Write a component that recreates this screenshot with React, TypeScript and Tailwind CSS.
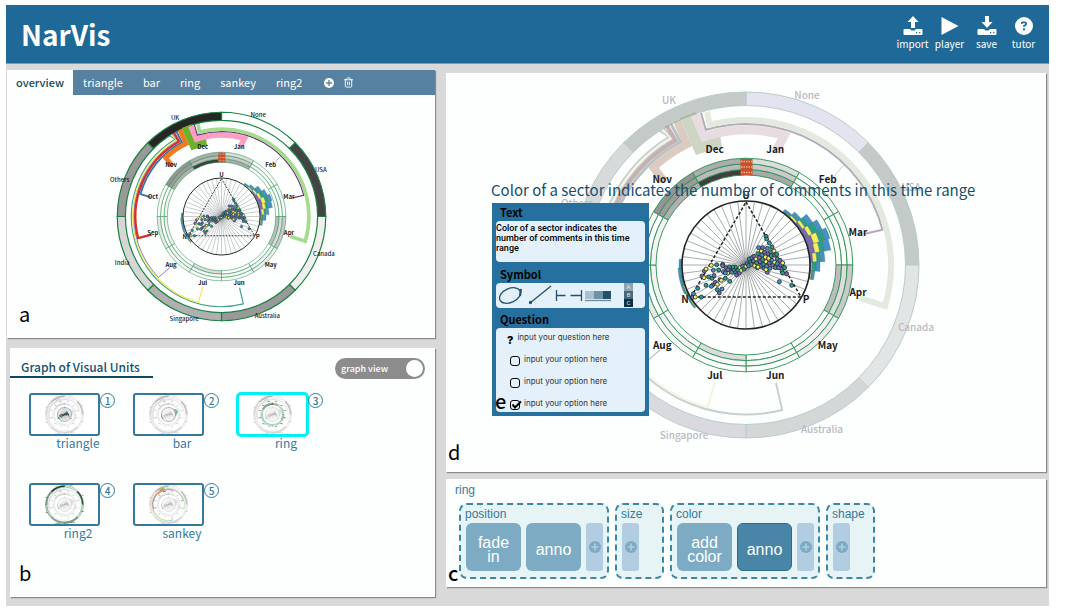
import { FaCircleQuestion } from "react-icons/fa6";
import { LuTrash2 } from "react-icons/lu";

type Layer = "outer" | "flow" | "ring" | "bars" | "triangle";

const point = (r: number, deg: number) => {
  const t = (deg * Math.PI) / 180;
  return `${(r * Math.sin(t)).toFixed(2)},${(-r * Math.cos(t)).toFixed(2)}`;
};

const sector = (r0: number, r1: number, a0: number, a1: number) =>
  `M${point(r0, a0)}L${point(r1, a0)}A${r1},${r1} 0 0 1 ${point(r1, a1)}L${point(r0, a1)}A${r0},${r0} 0 0 0 ${point(r0, a0)}Z`;

/* A ribbon that leaves the country ring, runs along a circle and ends at a month. */
const ribbon = (start: string, r: number, a0: number, a1: number, end: string) =>
  `M${start}L${point(r, a0)}A${r},${r} 0 0 ${a1 > a0 ? 1 : 0} ${point(r, a1)}L${end}`;

const countries = [
  { name: "None", fill: "#fdfffe", soft: "#e3e4ef", x: 61, y: -170 },
  { name: "USA", fill: "#444444", soft: "#c3cac8", x: 165, y: -78 },
  { name: "Canada", fill: "#efefef", soft: "#e2e5e6", x: 170, y: 62 },
  { name: "Australia", fill: "#999999", soft: "#d3d7d7", x: 76, y: 164 },
  { name: "Singapore", fill: "#b0b0b0", soft: "#dad9e0", x: -62, y: 170 },
  { name: "India", fill: "#d6d6d6", soft: "#dfe3e3", x: -165, y: 77 },
  { name: "Others", fill: "#999999", soft: "#d6dadb", x: -169, y: -62 },
  { name: "UK", fill: "#262626", soft: "#c3cac8", x: -77, y: -165 },
];

const months = ["Jan", "Feb", "Mar", "Apr", "May", "Jun", "Jul", "Aug", "Sep", "Oct", "Nov", "Dec"];

/* Comment counts per month as greys, from the inner track to the outer one. */
const tracks = [
  ["#a9a9a9", "#cbcbcb", "#dcdcdc"],
  ["#fdfffe", "#f8f8f8", "#fdfffe"],
  ["#fdfffe", "#fdfffe", "#f8f8f8"],
  ["#bdbdbd", "#dedede", "#cacaca"],
  ["#fdfffe", "#f3f3f3", "#ededed"],
  ["#fdfffe", "#f8f8f8", "#fdfffe"],
  ["#dcdcdc", "#f8f8f8", "#fdfffe"],
  ["#fdfffe", "#f3f3f3", "#f8f8f8"],
  ["#f3f3f3", "#fdfffe", "#e8e8e8"],
  ["#f3f3f3", "#fdfffe", "#f8f8f8"],
  ["#b0b0b0", "#9b9b9b", "#949494"],
  ["#3f3f3f", "#bababa", "#adadad"],
];

const hue = { p: "#7c68b0", y: "#f7ee58", g: "#2f9d86", b: "#4592c4" };

const stacks = [
  { from: 35, ends: [64, 65, 66, 68] },
  { from: 42.5, ends: [65, 67, 69, 72] },
  { from: 50, ends: [67, 70, 74, 79] },
  { from: 57.5, ends: [69, 73, 79, 84] },
  { from: 65, ends: [71, 77, 83, 88] },
  { from: 72.5, ends: [70, 75, 80, 86] },
  { from: 80, ends: [67, 71, 75, 79] },
  { from: 87.5, ends: [65, 66, 70, 74] },
  { from: 95, ends: [65, 66, 67, 69] },
  { from: 230, ends: [65, 66, 67, 67] },
  { from: 237.5, ends: [65, 65, 66, 67] },
  { from: 245, ends: [65, 66, 67, 68] },
  { from: 252.5, ends: [65, 65, 66, 68] },
  { from: 260, ends: [64, 65, 66, 68] },
  { from: 267.5, ends: [64, 64, 65, 67] },
];

const dots: [number, number][] = [
  [-160, 97], [-152, 96], [-158, 86], [-145, 70], [-134, 96], [-120, 61], [-132, 33], [-125, 18], [-120, 12],
  [-104, 1], [-98, 16], [-88, -1], [-82, 15], [-70, -2], [-68, 20], [-60, 8], [-55, 24], [-47, 10], [-42, 22],
  [-112, 36], [-102, 40], [-100, 60], [-104, 64], [-92, 52], [-86, 58], [-78, 44], [-74, 46], [-62, 40], [-49, 49],
  [-86, 74], [-72, 72], [-80, 84], [-70, 2], [-96, 32], [-126, 38], [-36, 14], [-30, 22], [-32, 6], [-24, 16],
  [-28, 30], [-20, 24], [-18, 8], [-14, 16], [-10, 4], [-6, 12], [-40, 6], [-50, 6], [-62, 24], [-54, 14],
  [0, 4], [4, -4], [8, 2], [12, -10], [10, -18], [16, -2], [18, -22], [22, -12], [26, 2], [24, -26], [30, -18],
  [32, -6], [34, 8], [36, -34], [38, -52], [40, -22], [42, -10], [44, 4], [46, -42], [48, -30], [50, -16],
  [52, -2], [54, 10], [50, -52], [56, -38], [58, -24], [60, -10], [62, 4], [60, -86], [62, -78], [70, -66],
  [64, -50], [66, -34], [68, -20], [70, -6], [72, 10], [78, -54], [74, -40], [76, -28], [78, -14], [80, 0],
  [84, -42], [86, -30], [86, -8], [88, 8], [92, -32], [94, -18], [94, -4], [98, 8], [102, -14], [104, 0],
  [110, -6], [112, 6], [116, 8], [108, 18], [110, 24], [122, 26], [64, 22], [60, 14], [36, 6], [100, 50], [137, 61],
];

const dotHues = [hue.p, hue.b, hue.g, hue.y, hue.g, hue.b, hue.p, hue.g, hue.y, hue.p, hue.g];

function RadialChart({
  view,
  focus,
  base = 1,
  weight = 1,
  soft = false,
  className,
}: {
  view: string;
  focus: Layer[];
  base?: number;
  weight?: number;
  soft?: boolean;
  className: string;
}) {
  const on = (layer: Layer) => base === 1 || focus.includes(layer);
  const look = (layer: Layer) => ({ opacity: on(layer) ? 1 : base, className: on(layer) ? "" : "grayscale" });
  return (
    <svg viewBox={view} className={className} fontFamily='"Noto Sans CJK SC", sans-serif' fontSize="10" textAnchor="middle">
      <g {...look("outer")}>
        {countries.map((c, i) => (
          <path
            key={c.name}
            d={sector(159.5, 173, i * 45, i * 45 + 45)}
            fill={soft ? c.soft : c.fill}
            stroke={soft ? "#b9cdc7" : "#1c8042"}
            strokeWidth={(soft ? 1 : 2) * weight}
          />
        ))}
        {countries.map((c) => (
          <text key={c.name} x={c.x} y={c.y + 4} fill={soft ? "#b9b9c4" : "#1b1b1b"} fontWeight="500">
            {c.name}
          </text>
        ))}
      </g>

      <g
        opacity={soft ? 0.42 : on("flow") ? 1 : base}
        fill="none"
        className={soft ? "saturate-[0.3]" : on("flow") ? "" : "grayscale"}
      >
        <path d={ribbon("-86,-134", 149.5, -31, -194, "30,118")} stroke="#45a394" strokeWidth={2 * weight} />
        <path d={ribbon("-84,-136", 147.5, -30.5, -165, "-31,116")} stroke="#f3ec5a" strokeWidth={2 * weight} />
        <path d={ribbon("-82,-137", 145.5, -30, -134, "-86,85")} stroke="#8272b4" strokeWidth="1.5" />
        <path d={ribbon("-79,-139", 143, -29.5, -104.5, "-116,30")} stroke="#d62f2d" strokeWidth={3 + weight} />
        <path d={ribbon("-75,-141", 139.5, -28, -74.5, "-118,-32")} stroke="#3673ad" strokeWidth="3" />
        <path d={ribbon("-69,-144", 134.5, -26, -43.5, "-82,-84")} stroke="#f47a20" strokeWidth="8" />
        <path d="M-66,-147L-50,-110L-24,-118L-26,-131L-42,-127L-50,-153Z" fill="#6db12c" />
        <path d={ribbon("-51,-150", 135, -18, 16.5, "31,-116")} stroke="#fb9fc4" strokeWidth="9" />
        <path d={ribbon("-45,-152", 141, -16.5, 75.5, "118,-31")} stroke="#6c2f7c" strokeWidth={2 * weight} />
        <path d={ribbon("-39,-153", 145, -14.5, 106.5, "114,33")} stroke="#a5db8c" strokeWidth="6" />
        <path d="M98,-100L84,-84" stroke="#a27bb0" strokeWidth="1" />
      </g>

      <g {...look("ring")}>
        {tracks.map((t, m) =>
          t.map((fill, k) => (
            <path
              key={`${m}-${k}`}
              d={sector(90 + k * 5.6, 95.6 + k * 5.6, m * 30, m * 30 + 30)}
              fill={fill}
              stroke="#2a9150"
              strokeWidth={0.9 * weight}
            />
          )),
        )}
        <rect x="-5.5" y="-106" width="12" height="16" fill="#c8502a" />
        <path d="M-5,-103.500H6M-5,-98H6M-5,-92.500H6" stroke="#eab39a" strokeWidth="1.5" strokeDasharray="1.500 1" />
        <g fill="#1b1b1b" fontWeight="700">
          {months.map((m, i) => {
            const [x, y] = point(117, 15 + i * 30).split(",").map(Number);
            return (
              <text key={m} x={x - 1} y={y + 1}>
                {m}
              </text>
            );
          })}
        </g>
      </g>

      <g {...look("bars")}>
        {stacks.map((s) =>
          [hue.p, hue.y, hue.g, hue.b].map((fill, k) => (
            <path
              key={`${s.from}-${fill}`}
              d={sector(k ? s.ends[k - 1] : 64, s.ends[k], s.from, s.from + 7.5)}
              fill={fill}
              stroke="#2c5f68"
              strokeWidth="0.3"
            />
          )),
        )}
      </g>

      <circle
        r="64"
        fill="#fdfffe"
        stroke="#222"
        strokeWidth={1.6 * weight}
        strokeOpacity={on("bars") || on("triangle") ? 1 : base}
      />
      <g {...look("triangle")}>
        {Array.from({ length: 48 }, (_, i) => (
          <path key={i} d={`M0,0L${point(63.5, i * 7.5)}`} stroke="#55555c" strokeWidth={0.5 * weight} />
        ))}
        <path d="M0,-63L55,32H-55Z" fill="none" stroke="#222" strokeWidth="1.5" strokeDasharray="3 2" />
        {dots.map(([x, y], i) => (
          <circle
            key={i}
            cx={x / 3}
            cy={y / 3}
            r="2"
            fill={dotHues[(i * 7 + (i % 3)) % dotHues.length]}
            stroke="#1d2733"
            strokeWidth={0.8 * weight}
          />
        ))}
        <g fill="#1b1b1b" fontWeight="700">
          <text x="0" y="-66">U</text>
          <text x="-61" y="38">N</text>
          <text x="60" y="38">P</text>
        </g>
      </g>
    </svg>
  );
}

const Plus = ({ className, sign }: { className: string; sign: string }) => (
  <svg viewBox="0 0 12 12" className={className}>
    <circle cx="6" cy="6" r="6" fill="currentColor" />
    <path d="M6 2.500v7M2.500 6h7" stroke={sign} strokeWidth="1.6" />
  </svg>
);

const Tray = ({ up = false }: { up?: boolean }) => (
  <svg viewBox="0 0 20 20" className="h-5 w-5" fill="currentColor">
    {up ? <path d="M10 0l5.500 6h-3.500v6H8V6H4.500z" /> : <path d="M8 0h4v6h3.500L10 12 4.500 6H8z" />}
    <path
      fillRule="evenodd"
      d="M1.500 13h5.500l1.500 1.500h3L13 13h5.500a1 1 0 0 1 1 1v4a1 1 0 0 1-1 1h-17a1 1 0 0 1-1-1v-4a1 1 0 0 1 1-1zM13 16v1.300h1.300V16zM16 16v1.300h1.300V16z"
    />
  </svg>
);

const actions = [
  { name: "import", icon: <Tray up /> },
  {
    name: "player",
    icon: (
      <svg viewBox="0 0 20 20" className="h-5 w-5" fill="currentColor">
        <path d="M1.500 1l17 9-17 9z" />
      </svg>
    ),
  },
  { name: "save", icon: <Tray /> },
  { name: "tutor", icon: <FaCircleQuestion className="h-5 w-[18px]" /> },
];

const units: { name: string; focus: Layer[]; selected?: boolean }[] = [
  { name: "triangle", focus: ["triangle"] },
  { name: "bar", focus: ["bars"] },
  { name: "ring", focus: ["ring"], selected: true },
  { name: "ring2", focus: ["outer"] },
  { name: "sankey", focus: ["flow"] },
];

const groups = [
  { name: "position", steps: ["fade in", "anno"], active: -1 },
  { name: "size", steps: [], active: -1 },
  { name: "color", steps: ["add color", "anno"], active: 1 },
  { name: "shape", steps: [], active: -1 },
];

const panel = "relative bg-[#fdfffe] shadow-[1px_1px_1px_0px_#8a8a8a]";
const marker = "absolute text-[20px] leading-6 text-black";

function Heading({ children }: { children: string }) {
  return <h3 className="pl-1 text-[11px] leading-[18px] font-bold text-black">{children}</h3>;
}

function Editor() {
  return (
    <form className="absolute top-[130px] left-[46px] flex w-[157px] flex-col bg-[#25709f] px-1 pb-1">
      <Heading>Text</Heading>
      <textarea
        aria-label="Text"
        defaultValue="Color of a sector indicates the number of comments in this time range"
        className="h-[41px] resize-none overflow-hidden rounded bg-[#eef7ff]/95 py-[2px] font-['Roboto',sans-serif] text-[9px] leading-[10px] font-medium text-black"
      />
      <div className="pt-[3px]">
        <Heading>Symbol</Heading>
      </div>
      <div className="flex h-[25px] items-center rounded bg-[#eef7ff]/95">
        <svg viewBox="0 0 149 25" className="h-[25px] w-full" fill="none" stroke="#24506a" strokeWidth="1.3">
          <ellipse cx="14" cy="12.5" rx="11" ry="7" transform="rotate(-24 14 12.5)" />
          <path d="M25 6l-1 7" strokeWidth="2" />
          <path d="M34 20L55 3" />
          <circle cx="34.5" cy="19.5" r="1" fill="#24506a" />
          <path d="M60.500 7v11M60.500 12.500h9M85.500 7v11M85.500 12.500h-11" />
          <g stroke="none">
            <path d="M89 8h9v8h-9z" fill="#a9c1cf" />
            <path d="M98 8h9v8h-9z" fill="#6e93a9" />
            <path d="M107 8h8v8h-8z" fill="#24506a" />
            <path d="M128 0h9v8h-9z" fill="#8fa3b0" />
            <path d="M128 8h9v8h-9z" fill="#48687c" />
            <path d="M128 16h9v8h-9z" fill="#0f2f42" />
          </g>
          <path d="M89 17.500h26" stroke="#6e8a9a" />
          <g stroke="none" fill="#dfe9ef" fontSize="6" fontFamily="Roboto, sans-serif" textAnchor="middle">
            <text x="132.5" y="6">A</text>
            <text x="132.5" y="14">B</text>
            <text x="132.5" y="22">C</text>
          </g>
        </svg>
      </div>
      <div className="pt-[2px]">
        <Heading>Question</Heading>
      </div>
      <div className="flex flex-col gap-[10px] rounded bg-[#eef7ff]/95 pt-[3px] pb-[3px] font-['Inter',sans-serif] text-[8px] leading-3 text-[#333]">
        <div className="flex h-3 items-center gap-1 pl-[11px]">
          <span className="pt-[6px] text-[11px] font-extrabold text-black">?</span>
          <input aria-label="Question" defaultValue="input your question here" className="h-3 w-[120px] bg-transparent" />
        </div>
        {[false, false, true].map((on, i) => (
          <div key={i} className="flex h-3 items-center gap-1 pl-[14px]">
            <span className="relative mt-1 size-[10px]">
              <input
                type="checkbox"
                aria-label={`Option ${i + 1} is correct`}
                defaultChecked={on}
                className="peer block size-[10px] appearance-none rounded-[3px] border border-black"
              />
              <svg
                viewBox="0 0 12 10"
                className="pointer-events-none absolute top-0 left-0 hidden h-[10px] w-3 peer-checked:block"
                fill="none"
                stroke="#000"
                strokeWidth="2"
              >
                <path d="M2.500 4.500L5 7.500 11 1.500" />
              </svg>
            </span>
            <input aria-label={`Option ${i + 1}`} defaultValue="input your option here" className="h-3 w-[110px] bg-transparent" />
          </div>
        ))}
      </div>
      <span className="absolute bottom-[3px] left-[3px] text-[20px] leading-6 font-medium text-black">e</span>
    </form>
  );
}

export default function App() {
  return (
    <div className="min-h-screen bg-white pt-[5px] pr-[23px] pb-[3px] pl-[6px] font-['Noto_Sans_CJK_SC',sans-serif]">
      <div className="flex min-h-[601px] flex-col bg-[#d9d9d9]">
        <header className="flex h-[59px] items-center justify-between border-b border-[#8e9aa3] bg-[#1f6998] pr-[7px] pl-[15px] text-white">
          <h1 className="text-[28px] leading-8 font-bold">NarVis</h1>
          <nav className="flex">
            {actions.map((a) => (
              <button key={a.name} type="button" className="flex w-[37px] flex-col items-center text-[10px] leading-4">
                {a.icon}
                {a.name}
              </button>
            ))}
          </nav>
        </header>

        <main className="grid grid-cols-[428fr_600fr] gap-[11px] pr-[3px] pl-px">
          <div className="flex min-w-0 flex-col gap-[10px] pt-[6px]">
            <section className={panel}>
              <div className="flex h-[25px] items-center bg-[#5781a0] text-[11px] leading-[25px] text-white">
                <button type="button" className="bg-[#fdfffe] px-[9px] font-medium text-[#174a56]">
                  overview
                </button>
                {["triangle", "bar", "ring", "sankey", "ring2"].map((t) => (
                  <button key={t} type="button" className="px-[10px]">
                    {t}
                  </button>
                ))}
                <button type="button" aria-label="Add tab" className="pl-3">
                  <Plus className="size-[10px]" sign="#5781a0" />
                </button>
                <button type="button" aria-label="Delete tab" className="pl-[9px]">
                  <LuTrash2 className="size-[11px]" />
                </button>
              </div>
              <RadialChart view="-200 -201 400 402" focus={[]} className="mx-auto h-[243px] w-[241px]" />
              <span className={`${marker} bottom-3 left-3`}>a</span>
            </section>

            <section className={`${panel} ml-[3px] h-[249px]`}>
              <div className="flex items-start justify-between pt-[10px] pr-[10px]">
                <h2 className="border-b-2 border-[#0f4866] pr-[13px] pl-[11px] text-[12px] leading-[18px] font-medium text-[#164e6c]">
                  Graph of Visual Units
                </h2>
                <label className="flex h-[21px] w-[90px] cursor-pointer items-center justify-between rounded-full bg-[#8c8c8c] pr-[2px] pl-[6px] text-[9px] font-medium text-white">
                  graph view
                  <input type="checkbox" defaultChecked className="size-[17px] appearance-none rounded-full bg-white" />
                </label>
              </div>
              <div className="flex flex-wrap gap-x-[6px] gap-y-[33px] pt-[14px] pr-10 pl-[19px]">
                {units.map((u, i) => (
                  <button key={u.name} type="button" className="h-[57px] w-[98px] text-[12px] leading-[14px] text-[#35799d]">
                    <span className="flex items-start">
                      <span
                        className={`flex h-[43px] w-[71px] items-center justify-center bg-white ${
                          u.selected ? "rounded-sm border-2 border-[#00f0f5] ring-1 ring-[#00f0f5]" : "rounded-[3px] border-2 border-[#35799d]"
                        }`}
                      >
                        <RadialChart view="-178 -178 356 356" focus={u.focus} base={0.35} weight={2} className="size-[39px]" />
                      </span>
                      <span className="flex size-[15px] items-center justify-center rounded-full border border-[#35799d] text-[10px] leading-none font-medium">
                        {i + 1}
                      </span>
                    </span>
                    {u.name}
                  </button>
                ))}
              </div>
              <span className={`${marker} bottom-3 left-[9px]`}>b</span>
            </section>
          </div>

          <div className="flex min-w-0 flex-col gap-[7px] pt-[9px]">
            <section className={panel}>
              <RadialChart
                view="-200 -192 400 399"
                focus={["ring", "bars", "triangle"]}
                soft
                className="mx-auto h-[399px] w-full"
              />
              <p className="absolute top-[105px] left-[45px] text-[15px] leading-6 whitespace-nowrap text-[#164e6c]">
                Color of a sector indicates the number of comments in this time range
              </p>
              <Editor />
              <span className={`${marker} bottom-2 left-[2px]`}>d</span>
            </section>

            <section className={`${panel} flex h-[108px] flex-col gap-[5px] pt-[3px] pl-[9px] font-['Liberation_Sans',sans-serif] text-[#35799d]`}>
              <h2 className="text-[12px] leading-4">ring</h2>
              <div className="flex gap-[6px] pl-1">
                {groups.map((g) => (
                  <div
                    key={g.name}
                    className={`flex h-[76px] flex-col rounded-lg border-2 border-dashed border-[#3d86a6] bg-[#e6f4f6] pl-[5px] ${
                      g.steps.length ? "w-[150px]" : "w-[49px]"
                    }`}
                  >
                    <h3 className="-ml-px text-[12px] leading-[18px]">{g.name}</h3>
                    <div className="flex items-center gap-[5px]">
                      {g.steps.map((s, i) => (
                        <button
                          key={s}
                          type="button"
                          className={`h-[48px] w-[55px] rounded-md px-1 pt-[6px] text-[16px] leading-[14px] text-white ${
                            i === g.active ? "border border-[#2b6c8e] bg-[#4885a6]" : "bg-[#7dabc4]"
                          }`}
                        >
                          {s}
                        </button>
                      ))}
                      <button
                        type="button"
                        aria-label={`Add to ${g.name}`}
                        className="flex h-[48px] w-[17px] items-center justify-center rounded-[3px] bg-[#b2cde1] text-[#7dabc4]"
                      >
                        <Plus className="size-3" sign="#b2cde1" />
                      </button>
                    </div>
                  </div>
                ))}
              </div>
              <span className="absolute bottom-[2px] left-[2px] font-['Noto_Sans_CJK_SC',sans-serif] text-[20px] leading-6 font-medium text-black">
                c
              </span>
            </section>
          </div>
        </main>
      </div>
    </div>
  );
}
